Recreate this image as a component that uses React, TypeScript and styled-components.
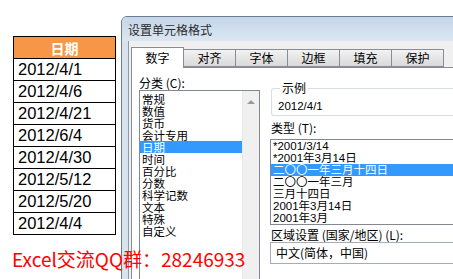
import styled, { createGlobalStyle } from "styled-components";

const GlobalStyle = createGlobalStyle`
  html, body {
    margin: 0;
    padding: 0;
    background: #ffffff;
    overflow: hidden;
  }
  body {
    font-family: "Noto Sans CJK SC", "Liberation Sans", sans-serif;
  }
`

const Page = styled.div`
  position: relative;
  width: 453px;
  height: 279px;
  display: flex;
  align-items: flex-start;
  overflow: hidden;
`

const DateTable = styled.table`
  margin: 36px 0 0 13px;
  border-collapse: collapse;
  width: 103px;
  flex-shrink: 0;
`

const HeadCell = styled.th`
  height: 21px;
  padding: 0;
  border: 1px solid #000;
  background: #f79646;
  color: #fff;
  font-size: 14px;
  font-weight: bold;
  text-align: center;
  font-family: "Noto Sans CJK SC", sans-serif;
`

const DateCell = styled.td`
  height: 21px;
  padding: 0 0 0 4px;
  border: 1px solid #000;
  font-family: "Liberation Sans", Arial, sans-serif;
  font-size: 16.5px;
  line-height: 21px;
  color: #000;
  white-space: nowrap;
`

const Dialog = styled.div`
  margin: 16px 0 0 5px;
  width: 360px;
  flex-shrink: 0;
  border: 1px solid #6d7b8c;
  border-radius: 6px 0 0 0;
  background: #d9e3ee;
  display: flex;
  flex-direction: column;
`

const TitleBar = styled.div`
  height: 24px;
  line-height: 26px;
  padding-left: 6px;
  font-size: 12px;
  color: #2b2b2b;
  border-radius: 5px 0 0 0;
  background: linear-gradient(#c4d6ea, #dbe6f2);
`

const Body = styled.div`
  margin-left: 6px;
  border-left: 1px solid #8c9aab;
  background: #f0f0f0;
  padding: 6px 0 0 2px;
`

const TabRow = styled.div`
  display: flex;
  align-items: flex-end;
  height: 20px;
  position: relative;
  z-index: 1;
`

const Tab = styled.div<{ $active?: boolean }>`
  width: 53px;
  height: ${p => (p.$active ? 21 : 18)}px;
  margin-bottom: ${p => (p.$active ? -1 : 0)}px;
  margin-left: ${p => (p.$active ? 0 : -1)}px;
  box-sizing: border-box;
  border: 1px solid #898c95;
  border-bottom: ${p => (p.$active ? "none" : "1px solid #898c95")};
  background: ${p => (p.$active ? "#ffffff" : "linear-gradient(#f3f3f3, #e5e5e5 50%, #dadada)")};
  font-size: 12px;
  line-height: ${p => (p.$active ? 19 : 16)}px;
  text-align: center;
  color: #000;
`

const Panel = styled.div`
  border: 1px solid #898c95;
  background: #ffffff;
  height: 240px;
  padding: 8px 0 0 7px;
  display: flex;
  gap: 11px;
`

const Column = styled.div<{ $width?: number }>`
  display: flex;
  flex-direction: column;
  width: ${p => (p.$width ? `${p.$width}px` : "auto")};
  flex: ${p => (p.$width ? "none" : "1")};
`

const Label = styled.div<{ $top?: number; $bottom?: number }>`
  font-size: 12px;
  line-height: 14px;
  height: 14px;
  color: #000;
  margin-top: ${p => p.$top ?? 0}px;
  margin-bottom: ${p => p.$bottom ?? 0}px;
  white-space: nowrap;
`

const CategoryBox = styled.div`
  height: 200px;
  border: 1px solid #828790;
  display: flex;
`

const ItemList = styled.div<{ $top?: number }>`
  flex: 1;
  padding-top: ${p => p.$top ?? 0}px;
  display: flex;
  flex-direction: column;
  overflow: hidden;
`

const Item = styled.div<{ $selected?: boolean; $latin?: boolean }>`
  height: 12px;
  line-height: 12px;
  font-size: ${p => (p.$latin ? 11.5 : 11.5)}px;
  padding-left: 2px;
  white-space: nowrap;
  color: ${p => (p.$selected ? "#fff" : "#000")};
  background: ${p => (p.$selected ? "#3399ff" : "transparent")};
  font-family: ${p => (p.$latin ? '"Liberation Sans", "Noto Sans CJK SC", sans-serif' : '"Noto Sans CJK SC", sans-serif')};
`

const ScrollTrack = styled.div`
  width: 17px;
  background: #f0f0f0;
  border-left: 1px solid #e8e8e8;
  display: flex;
  justify-content: center;
  padding-top: 9px;
  box-sizing: border-box;
`

const UpArrow = styled.div`
  width: 0;
  height: 0;
  border-left: 4px solid transparent;
  border-right: 4px solid transparent;
  border-bottom: 4px solid #9a9a9a;
`

const SampleGroup = styled.fieldset`
  margin: 5px 0 0 0;
  padding: 5px 6px 3px;
  border: 1px solid #d5dfe5;
  border-radius: 3px;
  border-right: none;
`

const SampleLegend = styled.legend`
  padding: 0 2px;
  margin-left: 2px;
  font-size: 12px;
  line-height: 14px;
`

const SampleValue = styled.div`
  font-family: "Liberation Sans", sans-serif;
  font-size: 11.5px;
  line-height: 12px;
  height: 12px;
`

const TypeBox = styled.div`
  height: 84px;
  border: 1px solid #828790;
  border-right: none;
  margin-left: -1px;
  display: flex;
`

const Combo = styled.div`
  height: 20px;
  margin-left: -1px;
  border: 1px solid #a5acb5;
  border-right: none;
  padding-left: 5px;
  font-size: 12px;
  line-height: 20px;
`

const Watermark = styled.div`
  position: absolute;
  left: 12px;
  top: 247px;
  font-family: "Noto Sans CJK SC", sans-serif;
  font-size: 19px;
  line-height: 24px;
  color: #ff0000;
  white-space: nowrap;
`

const dates = ["2012/4/1", "2012/4/6", "2012/4/21", "2012/6/4", "2012/4/30", "2012/5/12", "2012/5/20", "2012/4/4"]
const tabs = ["数字", "对齐", "字体", "边框", "填充", "保护"]
const categories = ["常规", "数值", "货币", "会计专用", "日期", "时间", "百分比", "分数", "科学记数", "文本", "特殊", "自定义"]
const types = ["*2001/3/14", "*2001年3月14日", "二〇〇一年三月十四日", "二〇〇一年三月", "三月十四日", "2001年3月14日", "2001年3月"]

const App = () => {
    return (
        <>
            <GlobalStyle/>
            <Page>
                <DateTable>
                    <thead>
                    <tr><HeadCell>日期</HeadCell></tr>
                    </thead>
                    <tbody>
                    {dates.map((d, i) => <tr key={i}><DateCell>{d}</DateCell></tr>)}
                    </tbody>
                </DateTable>
                <Dialog>
                    <TitleBar>设置单元格格式</TitleBar>
                    <Body>
                        <TabRow>
                            {tabs.map((t, i) => <Tab key={t} $active={i === 0}>{t}</Tab>)}
                        </TabRow>
                        <Panel>
                            <Column $width={121}>
                                <Label>分类 (C):</Label>
                                <CategoryBox>
                                    <ItemList $top={2}>
                                        {categories.map((c, i) => <Item key={c} $selected={i === 4}>{c}</Item>)}
                                    </ItemList>
                                    <ScrollTrack><UpArrow/></ScrollTrack>
                                </CategoryBox>
                            </Column>
                            <Column>
                                <SampleGroup>
                                    <SampleLegend>示例</SampleLegend>
                                    <SampleValue>2012/4/1</SampleValue>
                                </SampleGroup>
                                <Label $top={5} $bottom={4}>类型 (T):</Label>
                                <TypeBox>
                                    <ItemList>
                                        {types.map((t, i) => <Item key={t} $latin $selected={i === 2}>{t}</Item>)}
                                    </ItemList>
                                </TypeBox>
                                <Label $top={3}>区域设置 (国家/地区) (L):</Label>
                                <Combo>中文(简体，中国)</Combo>
                            </Column>
                        </Panel>
                    </Body>
                </Dialog>
                <Watermark>Excel交流QQ群：28246933</Watermark>
            </Page>
        </>
    )
}

export default App
